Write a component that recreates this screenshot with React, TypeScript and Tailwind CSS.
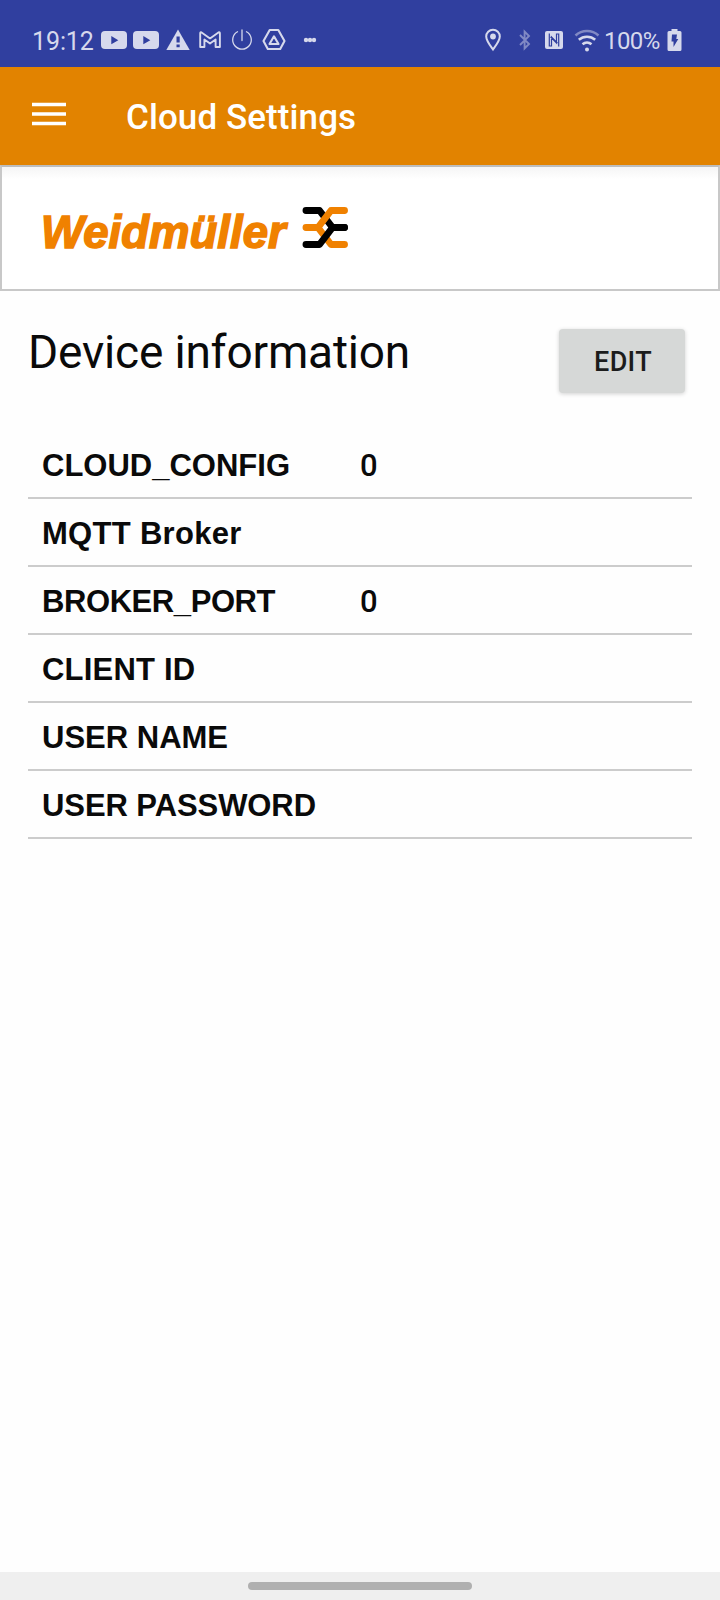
import React from "react";

const rows: { label: string; value?: string; track: string }[] = [
  { label: "CLOUD_CONFIG", value: "0", track: "tracking-[0px]" },
  { label: "MQTT Broker", track: "tracking-[0.3px]" },
  { label: "BROKER_PORT", value: "0", track: "tracking-[-0.42px]" },
  { label: "CLIENT ID", track: "tracking-[0.2px]" },
  { label: "USER NAME", track: "tracking-[0px]" },
  { label: "USER PASSWORD", track: "tracking-[-0.08px]" },
];

function NotificationIcons() {
  return (
    <svg className="block h-[67px] w-[240px] shrink-0" viewBox="100 0 240 67" fill="none" stroke="#d6d9ec">
      <g fill="#d6d9ec" stroke="none">
        <rect x="101" y="31" width="26" height="18" rx="4" />
        <rect x="133" y="31" width="26" height="18" rx="4" />
        <path d="M178 29.5 189.7 50H166.300Z" />
        <circle cx="306" cy="40" r="2.200" />
        <circle cx="310" cy="40" r="2.200" />
        <circle cx="314" cy="40" r="2.200" />
      </g>
      <path d="M111.300 36v8.300l7-4.150ZM143.300 36v8.300l7-4.150ZM176.500 36.500h3.200v6h-3.200ZM176.500 44.500h3.200v2.700h-3.200Z" fill="#303f9f" stroke="none" />
      <path d="M200.200 47V33.400q0-1.600 1.400-1l8.400 6 8.400-6q1.500-.6 1.500 1V47h-4.300v-7.500l-5.600 4-5.600-4V47Z" strokeWidth="1.900" strokeLinejoin="round" />
      <path d="M242 30v10.500M237.500 31.700a9.300 9.300 0 1 0 9 0" strokeWidth="1.300" strokeLinecap="round" />
      <path d="M269.700 30h8.600l6.200 11-4.300 8h-12.400l-4.300-8Z" strokeWidth="2.100" strokeLinejoin="round" />
      <path d="M274 36.300 278.500 44h-9Z" strokeWidth="2.100" strokeLinejoin="round" />
    </svg>
  );
}

function ConnectionIcons() {
  return (
    <svg className="block h-[67px] w-[124px] shrink-0" viewBox="480 0 124 67" fill="none" stroke="#d6d9ec">
      <path d="M493 49.500c-2.500-3.500-6.800-8.800-6.800-13a6.800 6.800 0 0 1 13.600 0c0 4.200-4.300 9.500-6.800 13Z" strokeWidth="2" />
      <circle cx="493" cy="36.500" r="2.900" fill="#d6d9ec" stroke="none" />
      <path d="m520 35 9 9-4.400 4.400V31.600L529 36l-9 9" stroke="#8189c4" strokeWidth="1.900" />
      <rect x="545" y="31" width="18" height="18" rx="2" fill="#d6d9ec" stroke="none" />
      <path d="M549.300 33.500V46h2.200V37l6 6.200M558.700 46.500V34h-2.200v9l-6-6.200" stroke="#303f9f" strokeWidth="1.200" />
      <path d="M575.500 35.500a17 17 0 0 1 23 0" stroke="#8189c4" strokeWidth="2.500" />
      <path d="M578.800 39.800a12.500 12.500 0 0 1 16.400 0M582.500 44.200a7 7 0 0 1 9 0" strokeWidth="2.600" />
      <circle cx="587" cy="49.500" r="2" fill="#d6d9ec" stroke="none" />
    </svg>
  );
}

function StatusBar() {
  return (
    <div className="flex h-[67px] shrink-0 items-center bg-[#303f9f] pl-[32px] font-['Roboto',sans-serif] text-[#d6d9ec]">
      <div className="w-[68px] shrink-0 whitespace-nowrap pt-[17px] text-[25px] leading-[30px] tracking-[-0.1px]">19:12</div>
      <NotificationIcons />
      <div className="w-[140px] shrink-0" />
      <ConnectionIcons />
      <div className="w-[62px] shrink-0 whitespace-nowrap pt-[15px] text-[24px] leading-[30px] tracking-[-0.6px]">100%</div>
      <svg className="block h-[67px] w-[18px] shrink-0" viewBox="666 0 18 67">
        <path d="M671.500 29h6v2h2.500q1.500 0 1.500 1.500v17q0 1.500-1.500 1.500h-11q-1.500 0-1.500-1.500v-17q0-1.500 1.500-1.500h2.500Z" fill="#d6d9ec" />
        <path d="M672 34.500h5l-.7 4.500h2l-4.800 8v-5.500h-2Z" fill="#303f9f" />
      </svg>
    </div>
  );
}

function BrandMark() {
  return (
    <svg className="block h-[42px] w-[46px]" viewBox="302 207 46 42" fill="none" strokeWidth="6.900" strokeLinecap="round" strokeLinejoin="round">
      <path d="M306 210.500h13.500L332.500 227.500H344.500" stroke="#000" />
      <path d="M344.500 210.500H331L318 227.500H306M318 227.500 331 244.500h13.500" stroke="#f08100" />
      <path d="M306 244.500h13.500L332.500 227.500H344.500" stroke="#000" />
    </svg>
  );
}

export default function App() {
  return (
    <div className="flex h-[1600px] w-[720px] flex-col overflow-hidden bg-[#fefefe] text-[#0a0a0a]">
      <StatusBar />
      <header className="flex h-[98px] shrink-0 items-center bg-[#e28300] pl-[32px]">
        <svg className="mb-[4px] block h-[24px] w-[34px]" viewBox="0 0 34 24" stroke="#fff" strokeWidth="3.400">
          <path d="M0 2.500h34M0 12h34M0 21.500h34" />
        </svg>
        <h1 className="ml-[60px] whitespace-nowrap pt-[4px] font-['Roboto',sans-serif] text-[35px] font-medium leading-[42px] tracking-[0.08px] text-white">Cloud Settings</h1>
      </header>
      <section className="flex h-[126px] shrink-0 border-2 border-t-[#bdbdbd] border-r-[#c8c8c8] border-b-[#c8c8c8] border-l-[#c8c8c8] bg-linear-to-b from-[#f5f5f5] to-white to-10% pl-[39px]">
        <div className="w-[261px] whitespace-nowrap pt-[38px] font-['Liberation_Sans',sans-serif] text-[45.5px] font-bold italic leading-[56px] tracking-[0.03px] text-[#f08100] [-webkit-text-stroke:1.6px_#f08100]">Weidmüller</div>
        <div className="pt-[40px]"><BrandMark /></div>
      </section>
      <main className="flex grow flex-col px-[28px]">
        <div className="flex h-[140px] items-start justify-between pr-[7px] pt-[32px]">
          <h2 className="mt-[-1px] whitespace-nowrap font-['Roboto',sans-serif] text-[46px] font-normal leading-[60px] tracking-[-0.18px]">Device information</h2>
          <button className="mt-[6px] h-[64px] w-[126px] rounded-[4px] bg-[#d6d8d7] pt-[3px] pl-[2px] font-['Roboto',sans-serif] text-[27px] font-medium leading-[61px] tracking-[0.3px] text-[#1c1c1c] shadow-[0_1px_4px_rgba(0,0,0,0.18)]">EDIT</button>
        </div>
        <div className="flex flex-col">
          {rows.map((row) => (
            <div key={row.label} className="flex h-[68px] items-center border-b-2 border-[#cccccc] pl-[14px] pt-[4px]">
              <div className={`w-[318px] shrink-0 whitespace-nowrap font-['Liberation_Sans',sans-serif] text-[31px] font-bold leading-[36px] ${row.track}`}>{row.label}</div>
              <div className="font-['Roboto',sans-serif] text-[31px] font-medium leading-[36px]">{row.value}</div>
            </div>
          ))}
        </div>
      </main>
      <footer className="flex h-[28px] shrink-0 justify-center bg-[#efefef] pt-[10px]">
        <div className="h-[8px] w-[224px] rounded-full bg-[#b0b0b0]" />
      </footer>
    </div>
  );
}
